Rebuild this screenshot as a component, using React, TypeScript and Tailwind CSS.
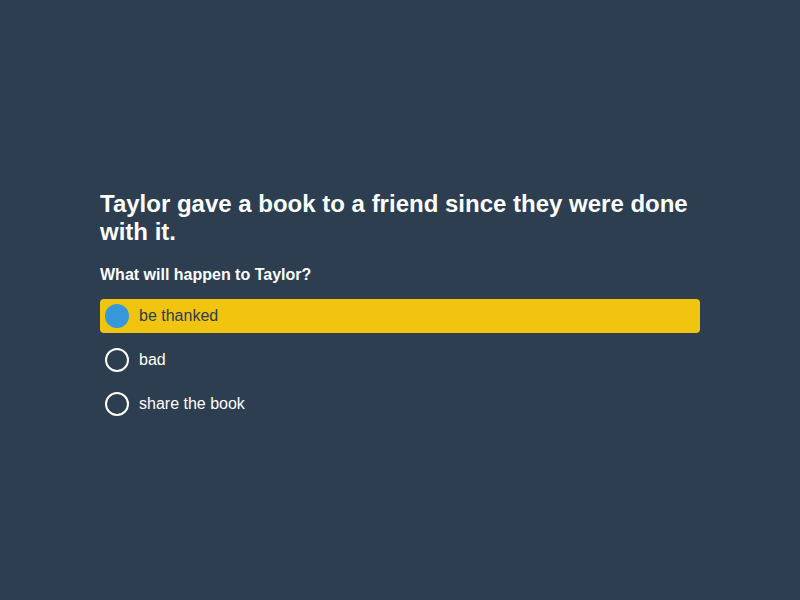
const OPTIONS = ['be thanked', 'bad', 'share the book'];
const SELECTED = 0;

export default function App() {
  return (
    <div
      className="min-h-screen w-full bg-[#2c3e50] flex items-center justify-center pt-[11px]"
      style={{ fontFamily: '"Liberation Sans", Arial, sans-serif' }}
    >
      <div className="w-[600px]">
        <h1 className="text-[24px] font-bold text-white leading-[28px] mb-[18px]">
          Taylor gave a book to a friend since they were done with it.
        </h1>
        <p className="text-[16px] leading-[22px] font-bold text-white mb-[13px]">What will happen to Taylor?</p>
        <div className="flex flex-col gap-[10px]">
          {OPTIONS.map((opt, i) => {
            const sel = i === SELECTED;
            return (
              <div
                key={opt}
                className={`h-[34px] flex items-center gap-[10px] pl-[5px] rounded-[4px] ${
                  sel ? 'bg-[#f1c40f] text-[#2c3e50]' : 'text-white'
                }`}
              >
                {sel ? (
                  <span className="w-[24px] h-[24px] rounded-full bg-[#3498db]" />
                ) : (
                  <span className="w-[24px] h-[24px] rounded-full border-2 border-white" />
                )}
                <span className="text-[16px]">{opt}</span>
              </div>
            );
          })}
        </div>
      </div>
    </div>
  );
}
